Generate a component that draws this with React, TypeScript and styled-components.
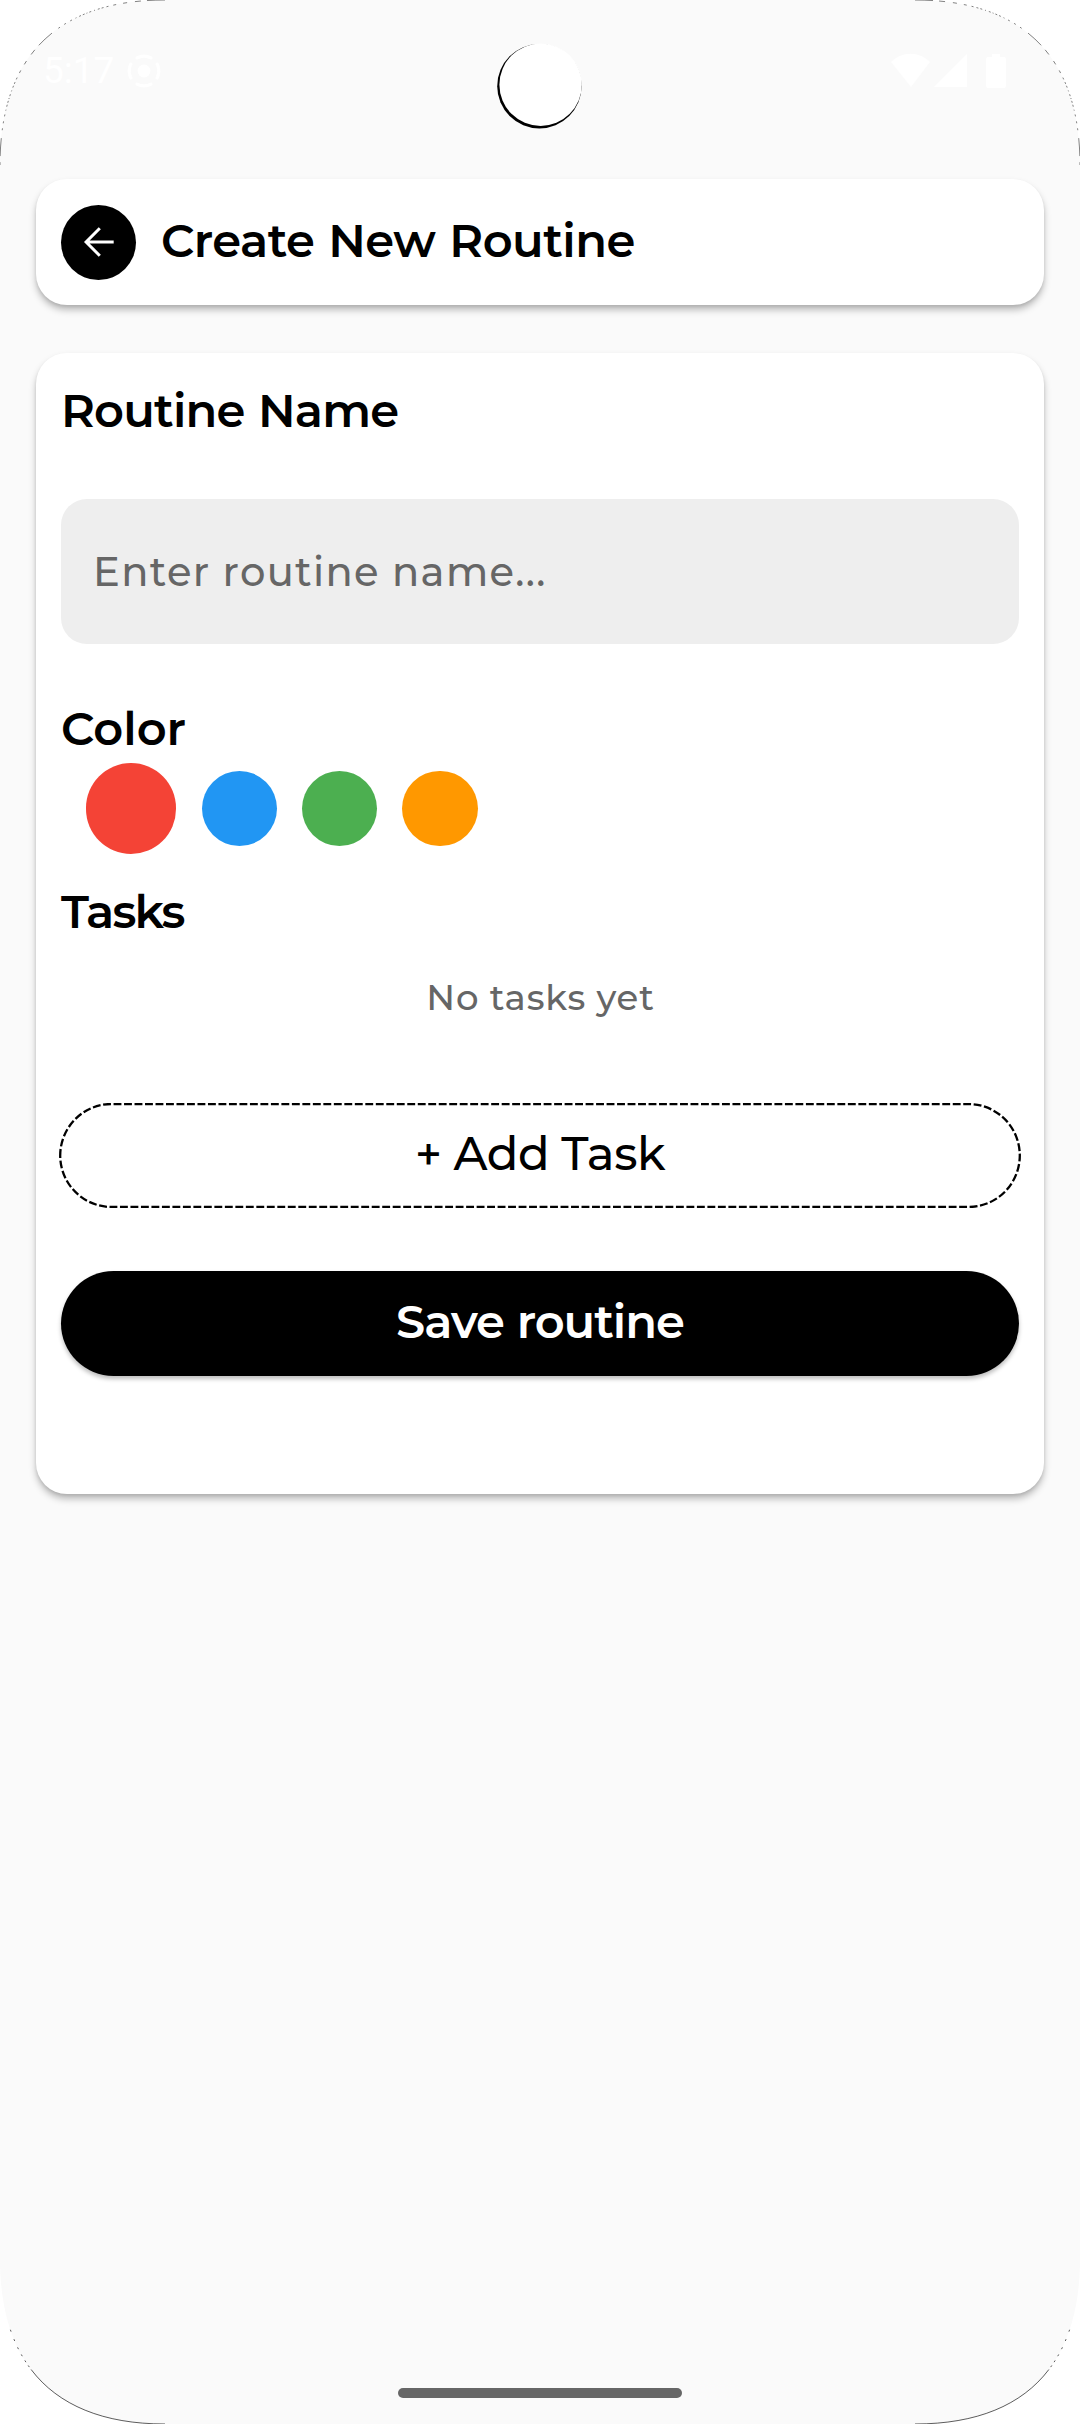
import React, { useState } from "react";
import styled, { createGlobalStyle } from "styled-components";

const GlobalStyle = createGlobalStyle`
  * { box-sizing: border-box; }
  html, body { margin: 0; padding: 0; background: #ffffff; }
  button { border: 0; margin: 0; padding: 0; background: none; font: inherit; }
`;

const Screen = styled.div`
  position: relative;
  display: flex;
  flex-direction: column;
  width: 1080px;
  height: 2424px;
  overflow: hidden;
  background: #fafafa;
  color: #000000;
  font-family: Montserrat, Inter, "Open Sans", sans-serif;
`;

const StatusBar = styled.header`
  display: flex;
  align-items: center;
  justify-content: space-between;
  height: 142px;
  margin-bottom: 37px;
  padding: 0 73px 0 43px;
  color: #ffffff;
`;

const StatusGroup = styled.div`
  display: flex;
  align-items: center;
`;

const Clock = styled.span`
  margin-right: 13px;
  font: 400 37px/44px Roboto, sans-serif;
`;

const Overlay = styled.svg`
  position: absolute;
  inset: 0;
  pointer-events: none;
`;

const Card = styled.section`
  margin: 0 36px;
  border-radius: 31px;
  background: #ffffff;
  box-shadow: 0 5px 7px rgba(0, 0, 0, 0.25), 0 2px 3px rgba(0, 0, 0, 0.08);
`;

const TitleCard = styled(Card)`
  display: flex;
  align-items: center;
  gap: 25px;
  height: 126px;
  margin-bottom: 48px;
  padding: 0 25px;
`;

const FormCard = styled(Card)`
  display: flex;
  flex-direction: column;
  height: 1141px;
  padding: 29px 25px 0;
`;

const BackButton = styled.button`
  display: flex;
  align-items: center;
  justify-content: center;
  width: 75px;
  height: 75px;
  border-radius: 50%;
  background: #000000;
`;

const Heading = styled.h2<{ $spacing: number; $wordGap?: number }>`
  margin: 0;
  font-size: 46.4px;
  font-weight: 620;
  line-height: 58px;
  letter-spacing: ${(p) => p.$spacing}px;
  word-spacing: ${(p) => p.$wordGap ?? 0}px;
  white-space: nowrap;
`;

const Title = styled(Heading)`
  padding-bottom: 2px;
`;

const NameInput = styled.input`
  width: 958px;
  height: 145px;
  margin: 59px 0 56px;
  padding: 0 32px;
  border: 0;
  border-radius: 26px;
  outline: 0;
  background: #eeeeee;
  font: 500 40px/48px Montserrat, Inter, sans-serif;
  letter-spacing: 1.35px;
  &::placeholder { color: #666666; opacity: 1; }
`;

const Swatches = styled.div`
  display: flex;
  align-items: center;
  gap: 25.2px;
  height: 91px;
  margin: 5px 0 29px;
  padding-left: 25px;
`;

const Swatch = styled.button<{ $color: string; $selected: boolean }>`
  width: ${(p) => (p.$selected ? 90.4 : 75.2)}px;
  height: ${(p) => (p.$selected ? 90.4 : 75.2)}px;
  border-radius: 50%;
  background: ${(p) => p.$color};
`;

const EmptyText = styled.p`
  margin: 32px 0 80px;
  padding-left: 1px;
  color: #666666;
  font-size: 35.5px;
  font-weight: 500;
  line-height: 50px;
  letter-spacing: 0.85px;
  text-align: center;
`;

const AddButton = styled.button`
  position: relative;
  height: 105px;
  margin-bottom: 63px;
  padding-bottom: 4px;
  color: #000000;
  font-size: 46.4px;
  font-weight: 500;
  line-height: 60px;
  letter-spacing: -0.43px;
`;

const DashedOutline = styled.svg`
  position: absolute;
  top: 0;
  left: -2px;
`;

const SaveButton = styled.button`
  height: 105px;
  padding-bottom: 4px;
  border-radius: 53px;
  background: #000000;
  box-shadow: 0 3px 4px rgba(0, 0, 0, 0.26);
  color: #ffffff;
  font-size: 46.4px;
  font-weight: 620;
  line-height: 60px;
  letter-spacing: -1px;
  word-spacing: 1px;
`;

const HomeIndicator = styled.div`
  width: 284px;
  height: 10px;
  margin: auto auto 26px;
  border-radius: 5px;
  background: #666666;
`;

const colors = ["#f44336", "#2196f3", "#4caf50", "#ff9800"];

const corner = "M165 0C57 0 0 57 0 165";
const topDashes = "18 6 6 8 4 7 3 5 2 3 2 2 2 3 1 3 2 2 1 2 2 2 2 3 1 4 2 5 2 5 2 8";
const bottomDashes = "150 3 2 4 2 5 2 6 2 7 2 8 2 200";

function DeviceFrame() {
  return (
    <Overlay width="1080" height="2424" viewBox="0 0 1080 2424" aria-hidden="true">
      {["", "translate(1080 0) scale(-1 1)"].map((t) => (
        <g key={t} transform={t || undefined}>
          <path d={`${corner}V0Z`} fill="#fff" />
          <path d={corner} fill="none" stroke="#000" strokeWidth="0.7" strokeOpacity="0.7" strokeDasharray={topDashes} />
          <g transform="translate(0 2424) scale(1 -1)">
            <path d={`${corner}V0Z`} fill="#fff" />
            <path d={corner} fill="none" stroke="#000" strokeWidth="0.8" strokeOpacity="0.8" strokeDasharray={bottomDashes} />
          </g>
        </g>
      ))}
      <circle cx="539.4" cy="86.2" r="42.2" fill="#000" />
      <circle cx="540.6" cy="84.7" r="41.2" fill="#fff" />
    </Overlay>
  );
}

function RecordIcon() {
  return (
    <svg width="34" height="34" viewBox="0 0 34 34" aria-hidden="true">
      <circle cx="17" cy="17" r="6.4" fill="#fff" />
      <circle cx="17" cy="17" r="14.8" fill="none" stroke="#fff" strokeWidth="3.2" strokeLinecap="round" pathLength="360" strokeDasharray="56 34" strokeDashoffset="28" />
    </svg>
  );
}

function SystemIcons() {
  return (
    <svg width="116" height="36" viewBox="0 0 116 36" fill="#fff" aria-hidden="true">
      <path d="M0 9C11-2 28-2 39 9L20 34Z" />
      <path d="M43 34L76 1V34Z" />
      <path d="M101 1h8v3h4a2 2 0 0 1 2 2v27a2 2 0 0 1-2 2H97a2 2 0 0 1-2-2V6a2 2 0 0 1 2-2h4Z" />
    </svg>
  );
}

function BackArrow() {
  return (
    <svg width="32" height="32" viewBox="0 0 32 32" fill="none" stroke="#fff" strokeWidth="3" aria-hidden="true">
      <path d="M30.7 16H4M16.8 2.3L3.1 16l13.7 13.7" />
    </svg>
  );
}

export default function App() {
  const [selected, setSelected] = useState(0);
  const [name, setName] = useState("");

  return (
    <>
      <GlobalStyle />
      <Screen>
        <StatusBar>
          <StatusGroup>
            <Clock>5:17</Clock>
            <RecordIcon />
          </StatusGroup>
          <SystemIcons />
        </StatusBar>
        <TitleCard>
          <BackButton aria-label="Back">
            <BackArrow />
          </BackButton>
          <Title as="h1" $spacing={-0.5} $wordGap={1.6}>Create New Routine</Title>
        </TitleCard>
        <FormCard>
          <Heading $spacing={-0.8} $wordGap={1.5}>Routine Name</Heading>
          <NameInput
            value={name}
            onChange={(e) => setName(e.target.value)}
            placeholder="Enter routine name..."
          />
          <Heading $spacing={0}>Color</Heading>
          <Swatches>
            {colors.map((color, i) => (
              <Swatch
                key={color}
                $color={color}
                $selected={i === selected}
                aria-label={color}
                onClick={() => setSelected(i)}
              />
            ))}
          </Swatches>
          <Heading $spacing={-1.7}>Tasks</Heading>
          <EmptyText>No tasks yet</EmptyText>
          <AddButton>
            <DashedOutline width="962" height="105" viewBox="0 0 962 105" aria-hidden="true">
              <path
                d="M1.2 52.5A51.5 51.5 0 0 1 52.7 1H909.3A51.5 51.5 0 0 1 909.3 104H52.7A51.5 51.5 0 0 1 1.2 52.5Z"
                fill="none"
                stroke="#000"
                strokeWidth="2.3"
                strokeDasharray="7.88 2.61"
                strokeDashoffset="1.3"
              />
            </DashedOutline>
            + Add Task
          </AddButton>
          <SaveButton>Save routine</SaveButton>
        </FormCard>
        <HomeIndicator />
        <DeviceFrame />
      </Screen>
    </>
  );
}
